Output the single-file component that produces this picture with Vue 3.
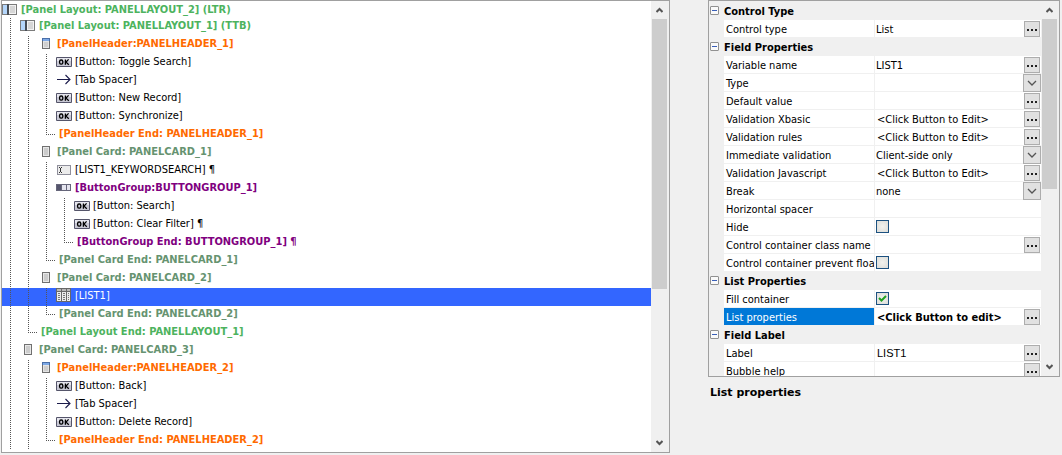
<script setup>
import { ref } from 'vue'

const rows = [
  { d: 0, kind: 'layout', icon: 'layout', text: '[Panel Layout: PANELLAYOUT_2] (LTR)' },
  { d: 1, kind: 'layout', icon: 'layout', text: '[Panel Layout: PANELLAYOUT_1] (TTB)' },
  { d: 2, kind: 'header', icon: 'header', text: '[PanelHeader:PANELHEADER_1]' },
  { d: 3, kind: 'item', icon: 'ok', text: '[Button: Toggle Search]' },
  { d: 3, kind: 'item', icon: 'arrow', text: '[Tab Spacer]' },
  { d: 3, kind: 'item', icon: 'ok', text: '[Button: New Record]' },
  { d: 3, kind: 'item', icon: 'ok', text: '[Button: Synchronize]' },
  { d: 3, kind: 'header', end: true, text: '[PanelHeader End: PANELHEADER_1]' },
  { d: 2, kind: 'card', icon: 'card', text: '[Panel Card: PANELCARD_1]' },
  { d: 3, kind: 'item', icon: 'input', text: '[LIST1_KEYWORDSEARCH] ¶' },
  { d: 3, kind: 'group', icon: 'group', text: '[ButtonGroup:BUTTONGROUP_1]' },
  { d: 4, kind: 'item', icon: 'ok', text: '[Button: Search]' },
  { d: 4, kind: 'item', icon: 'ok', text: '[Button: Clear Filter] ¶' },
  { d: 4, kind: 'group', end: true, text: '[ButtonGroup End: BUTTONGROUP_1] ¶' },
  { d: 3, kind: 'card', end: true, text: '[Panel Card End: PANELCARD_1]' },
  { d: 2, kind: 'card', icon: 'card', text: '[Panel Card: PANELCARD_2]' },
  { d: 3, kind: 'item', icon: 'list', text: '[LIST1]' },
  { d: 3, kind: 'card', end: true, text: '[Panel Card End: PANELCARD_2]' },
  { d: 2, kind: 'layout', end: true, text: '[Panel Layout End: PANELLAYOUT_1]' },
  { d: 1, kind: 'card', icon: 'card', text: '[Panel Card: PANELCARD_3]' },
  { d: 2, kind: 'header', icon: 'header', text: '[PanelHeader:PANELHEADER_2]' },
  { d: 3, kind: 'item', icon: 'ok', text: '[Button: Back]' },
  { d: 3, kind: 'item', icon: 'arrow', text: '[Tab Spacer]' },
  { d: 3, kind: 'item', icon: 'ok', text: '[Button: Delete Record]' },
  { d: 3, kind: 'header', end: true, text: '[PanelHeader End: PANELHEADER_2]' },
]
const selected = ref(16)

const edit = '<Click Button to Edit>'
const props = ref([
  { head: 'Control Type' },
  { name: 'Control type', type: 'dots', value: 'List' },
  { head: 'Field Properties' },
  { name: 'Variable name', type: 'dots', value: 'LIST1' },
  { name: 'Type', type: 'select', value: '' },
  { name: 'Default value', type: 'dots', value: '' },
  { name: 'Validation Xbasic', type: 'dots', value: edit },
  { name: 'Validation rules', type: 'dots', value: edit },
  { name: 'Immediate validation', type: 'select', value: 'Client-side only' },
  { name: 'Validation Javascript', type: 'dots', value: edit },
  { name: 'Break', type: 'select', value: 'none' },
  { name: 'Horizontal spacer', type: 'text', value: '' },
  { name: 'Hide', type: 'check', value: false },
  { name: 'Control container class name', type: 'dots', value: '' },
  { name: 'Control container prevent float', type: 'check', value: false },
  { head: 'List Properties' },
  { name: 'Fill container', type: 'check', value: true },
  { name: 'List properties', type: 'dots', value: '<Click Button to edit>', active: true },
  { head: 'Field Label' },
  { name: 'Label', type: 'dots', value: 'LIST1', plain: true },
  { name: 'Bubble help', type: 'dots', value: '' },
])
</script>

<template>
  <main class="designer">
    <section class="panel tree">
      <ul class="nodes" role="tree" aria-label="Controls">
        <li
          v-for="(r, i) in rows"
          :key="i"
          class="node"
          role="treeitem"
          :aria-selected="i === selected"
          :class="[r.kind, { selected: i === selected }]"
          @click="selected = i"
        >
          <span v-for="n in r.d" :key="n" class="guide" :class="{ elbow: r.end && n === r.d }"></span>
          <span v-if="!r.end" class="icon">
            <svg v-if="r.icon === 'layout'" width="16" height="12" viewBox="0 0 16 12" shape-rendering="crispEdges">
              <rect x="0" y="1" width="15" height="11" fill="#7b7b7b" />
              <rect x="1" y="2" width="4" height="9" fill="#b4d6fb" />
              <rect x="5" y="1" width="2" height="11" fill="#474d55" />
              <rect x="7" y="2" width="7" height="9" fill="#f2f2f2" />
              <rect x="8" y="3" width="5" height="7" fill="#d6d6d6" />
            </svg>
            <svg v-else-if="r.icon === 'header'" width="8" height="12" viewBox="0 0 8 12" shape-rendering="crispEdges">
              <rect width="8" height="11" y="1" fill="#6f6f6f" />
              <rect x="1" y="2" width="6" height="9" fill="#e4e4e4" />
              <rect x="0" y="1" width="8" height="3" fill="#4a6fa8" />
              <rect x="1" y="2" width="6" height="2" fill="#7da9e6" />
              <rect x="2" y="5" width="4" height="5" fill="#cfcfcf" />
            </svg>
            <svg v-else-if="r.icon === 'card'" width="8" height="12" viewBox="0 0 8 12" shape-rendering="crispEdges">
              <rect width="8" height="11" y="1" fill="#707070" />
              <rect x="1" y="2" width="6" height="9" fill="#e8e8e8" />
              <rect x="2" y="3" width="4" height="7" fill="#cccccc" />
            </svg>
            <svg v-else-if="r.icon === 'ok'" width="16" height="12" viewBox="0 1 16 12">
              <rect x="0" y="3" width="16" height="10" rx="1" fill="#55556a" />
              <rect x="1" y="4" width="14" height="8" fill="#c8c8d4" />
              <rect x="1" y="4" width="14" height="3" fill="#e6e6ee" />
              <rect x="3.6" y="6" width="3.2" height="4.2" rx="1.4" fill="none" stroke="#000" stroke-width="1.3" />
              <path d="M9.4 5.4v5.4M12.6 5.4L10 8.1L12.8 10.8" fill="none" stroke="#000" stroke-width="1.3" />
            </svg>
            <svg v-else-if="r.icon === 'arrow'" width="16" height="12" viewBox="0 0 16 12">
              <path d="M1 6.5H14M9.5 2L14 6.5L9.5 11" fill="none" stroke="#1b1b4b" stroke-width="1.1" />
            </svg>
            <svg v-else-if="r.icon === 'input'" width="16" height="12" viewBox="0 0 16 12" shape-rendering="crispEdges">
              <rect x="1" y="2" width="14" height="10" fill="#8f8f9b" />
              <rect x="2" y="3" width="12" height="8" fill="#ececec" />
              <path d="M3 4h1v1h-1zM5 4h1v1h-1zM4 5h1v4h-1zM3 9h1v1h-1zM5 9h1v1h-1z" fill="#303030" />
            </svg>
            <svg v-else-if="r.icon === 'group'" width="16" height="12" viewBox="0 0 16 12" shape-rendering="crispEdges">
              <rect x="0" y="3" width="15" height="7" fill="#66667a" />
              <rect x="1" y="4" width="4" height="5" fill="#55556c" />
              <rect x="6" y="4" width="4" height="5" fill="#e4e4ee" />
              <rect x="11" y="4" width="3" height="5" fill="#e4e4ee" />
            </svg>
            <svg v-else width="16" height="14" viewBox="0 0 16 14" shape-rendering="crispEdges">
              <rect x="0" y="0" width="15" height="14" fill="#686868" />
              <path d="M1 1h4v2h-4zM6 1h4v2h-4zM11 1h3v2h-3z" fill="#b8b8b8" />
              <path d="M1 4h4v9h-4zM6 4h4v9h-4zM11 4h3v9h-3z" fill="#ececec" />
              <path d="M2 5h2v1h-2zM2 7h2v1h-2zM2 9h2v1h-2zM2 11h2v1h-2zM7 5h2v1h-2zM7 7h2v1h-2zM7 9h2v1h-2zM7 11h2v1h-2zM12 5h1v1h-1zM12 7h1v1h-1zM12 9h1v1h-1zM12 11h1v1h-1z" fill="#777" />
            </svg>
          </span>
          <span class="caption">{{ r.text }}</span>
        </li>
      </ul>
      <div class="bar" aria-hidden="true">
        <svg class="tip" width="7" height="6" viewBox="0 0 7 6"><path d="M0.5 5L3.5 2L6.5 5" /></svg>
        <div class="track"><div class="thumb long"></div></div>
        <svg class="tip" width="7" height="6" viewBox="0 0 7 6"><path d="M0.5 1L3.5 4L6.5 1" /></svg>
      </div>
    </section>

    <aside class="side">
      <section class="panel grid">
        <div class="sheet">
          <template v-for="(p, i) in props" :key="i">
            <h2 v-if="p.head" class="head">
              <button class="fold" type="button" :aria-label="'Collapse ' + p.head"></button>{{ p.head }}
            </h2>
            <div v-else class="prop" :class="{ active: p.active }">
              <label class="name" :for="'p' + i">{{ p.name }}</label>
              <div class="value">
                <input v-if="p.type === 'check'" :id="'p' + i" v-model="p.value" class="check" type="checkbox" />
                <svg v-if="p.type === 'check' && p.value" class="mark" width="13" height="13" viewBox="0 0 13 13">
                  <path d="M3 6L5.5 8.5L10 4" />
                </svg>
                <select v-if="p.type === 'select'" :id="'p' + i" v-model="p.value" class="field drop">
                  <option>{{ p.value }}</option>
                </select>
                <input
                  v-if="p.type === 'dots' || p.type === 'text'"
                  :id="'p' + i"
                  v-model="p.value"
                  class="field"
                  :class="{ plain: p.plain, hint: p.value.startsWith('<') }"
                  type="text"
                />
                <button v-if="p.type === 'dots'" class="dots" type="button" :aria-label="'Edit ' + p.name">
                  <i></i><i></i><i></i>
                </button>
                <span v-if="p.type === 'select'" class="chevron" aria-hidden="true">
                  <svg width="10" height="6" viewBox="0 0 10 6"><path d="M1 1L5 5L9 1" /></svg>
                </span>
              </div>
            </div>
          </template>
        </div>
        <div class="bar" aria-hidden="true">
          <svg class="tip" width="7" height="6" viewBox="0 0 7 6"><path d="M0.5 5L3.5 2L6.5 5" /></svg>
          <div class="track"><div class="thumb short"></div></div>
          <svg class="tip" width="7" height="6" viewBox="0 0 7 6"><path d="M0.5 1L3.5 4L6.5 1" /></svg>
        </div>
      </section>
      <p class="help">List properties</p>
    </aside>
  </main>
</template>

<style>
body {
  background: #f0f0f0;
}
</style>

<style scoped>
.designer {
  display: grid;
  grid-template-columns: minmax(0, 1fr) 352px;
  gap: 38px;
  box-sizing: border-box;
  height: 100vh;
  padding: 0 2px 2px 1px;
  overflow: hidden;
  background: #f0f0f0;
  color: #000;
  font: 11px/16px "DejaVu Sans Condensed", Tahoma, sans-serif;
}
.panel {
  display: flex;
  box-sizing: border-box;
  border: 1px solid #a0a0a0;
  overflow: hidden;
}
.nodes {
  flex: 1;
  min-width: 0;
  margin: 0 1px 0 0;
  padding: 0;
  list-style: none;
  background: #fff;
}
.node {
  display: flex;
  height: 18px;
  white-space: pre;
  font-weight: bold;
}
.node:first-child {
  height: 17px;
}
.guide {
  flex: none;
  width: 9px;
  margin-left: 8px;
  margin-right: 1px;
  background: repeating-linear-gradient(#555 0 1px, transparent 1px 2px) 0 0 / 1px 100% no-repeat;
}
.elbow {
  background:
    repeating-linear-gradient(#555 0 1px, transparent 1px 2px) 0 0 / 1px 8px no-repeat,
    repeating-linear-gradient(90deg, #555 0 1px, transparent 1px 2px) 0 8px / 100% 1px no-repeat;
}
.icon {
  display: flex;
  flex: none;
  align-items: center;
  justify-content: center;
  width: 16px;
  height: 14px;
}
.caption {
  margin-left: 3px;
  line-height: 16px;
}
.node:first-child .icon {
  height: 16px;
}
.node:first-child .caption {
  line-height: 18px;
}
.layout { color: #4db35e; }
.header { color: #ff6a00; }
.card { color: #669370; }
.group { color: #800080; }
.item { font-weight: normal; }
.selected { background: #3366ff; color: #fff; }

.bar {
  display: flex;
  flex: none;
  flex-direction: column;
  align-items: center;
  width: 15px;
  margin-right: 2px;
  background: #f0f0f0;
}
.tip {
  flex: none;
  margin: 6px 0;
}
.tip path {
  fill: none;
  stroke: #555;
  stroke-width: 2;
}
.track {
  flex: 1;
  align-self: stretch;
}
.thumb { background: #cdcdcd; }
.long { height: 65%; }
.short { height: 50%; }

.side {
  display: flex;
  flex-direction: column;
  min-width: 0;
}
.grid {
  height: calc(100vh - 78px);
}
.sheet {
  flex: 1;
  min-width: 0;
  margin-right: 1px;
  padding-top: 1px;
}
.head {
  display: flex;
  align-items: flex-start;
  height: 18px;
  margin: 0;
  font-size: 11px;
  font-weight: bold;
  line-height: 20px;
}
.fold {
  box-sizing: border-box;
  width: 9px;
  height: 9px;
  margin: 4px 5px 0 1px;
  padding: 0;
  border: 1px solid #919191;
  border-radius: 1px;
  background: linear-gradient(#3a5fb8, #3a5fb8) center / 5px 1px no-repeat, #fafafa;
}
.prop {
  display: grid;
  grid-template-columns: 150px minmax(0, 1fr);
  gap: 1px;
  height: 18px;
  margin-left: 15px;
}
.name {
  height: 17px;
  padding-left: 2px;
  overflow: hidden;
  background: #fff;
  white-space: nowrap;
  line-height: 20px;
}
.active .name {
  background: #0078d7;
  color: #fff;
}
.active .field {
  font-weight: bold;
}
.value {
  display: flex;
  position: relative;
  height: 17px;
  background: #fff;
}
.field {
  flex: 1;
  box-sizing: border-box;
  min-width: 0;
  height: 17px;
  padding: 1px 0 0 1px;
  border: 0;
  outline: 0;
  appearance: none;
  background: none;
  color: inherit;
  font: inherit;
}
.drop { padding-top: 2px; }
.hint { padding-left: 2px; }
.plain { font-family: "Liberation Sans", Arial, sans-serif; padding-left: 2px; }
.dots {
  display: flex;
  align-items: center;
  justify-content: center;
  gap: 2px;
  box-sizing: border-box;
  width: 16px;
  height: 16px;
  margin: 1px 1px 0 0;
  padding: 2px 0 0;
  border: 1px solid #adadad;
  background: #e1e1e1;
}
.dots i {
  width: 2px;
  height: 2px;
  background: #222;
}
.chevron {
  display: flex;
  position: absolute;
  top: 0;
  right: 0;
  align-items: center;
  justify-content: center;
  box-sizing: border-box;
  width: 18px;
  height: 18px;
  border: 1px solid #adadad;
  background: #e1e1e1;
  pointer-events: none;
}
.chevron path {
  fill: none;
  stroke: #555;
  stroke-width: 1.3;
}
.check {
  box-sizing: border-box;
  width: 13px;
  height: 13px;
  margin: 2px 0 0 1px;
  border: 1px solid #1c5180;
  appearance: none;
  background: radial-gradient(#f2f2ee, #dcdcd8);
}
.mark {
  position: absolute;
  top: 2px;
  left: 1px;
  pointer-events: none;
}
.mark path {
  fill: none;
  stroke: #21a121;
  stroke-width: 2;
}
.help {
  margin: 7px 0 0 2px;
  font: bold 11px/18px "DejaVu Sans", Verdana, sans-serif;
}
</style>
